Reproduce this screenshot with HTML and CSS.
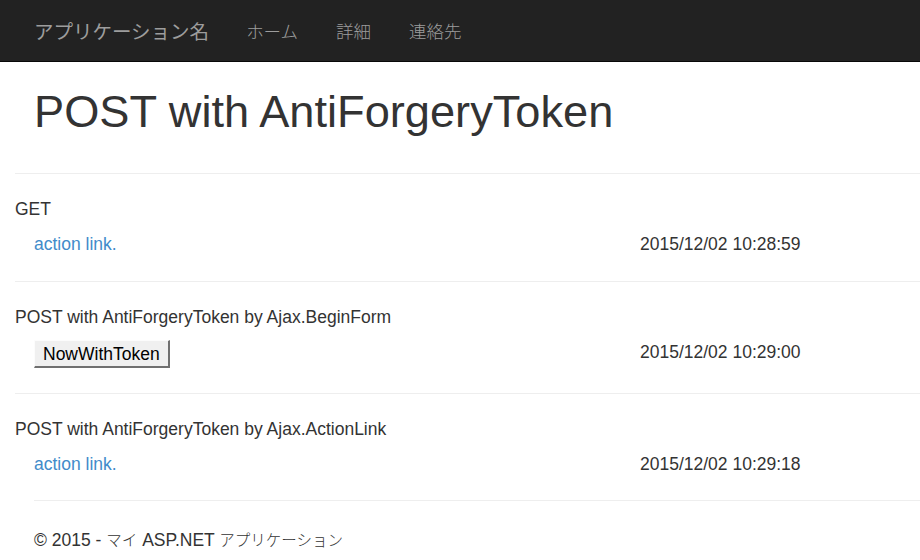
FILE: index.html
```html
<!DOCTYPE html>
<html lang="ja">
<head>
<meta charset="utf-8">
<title>POST with AntiForgeryToken</title>
<link rel="stylesheet" href="styles.css">
</head>
<body>
<nav class="navbar">
  <a class="brand" href="#">アプリケーション名</a>
  <ul class="nav">
    <li><a href="#">ホーム</a></li>
    <li><a href="#">詳細</a></li>
    <li><a href="#">連絡先</a></li>
  </ul>
</nav>
<main class="container">
  <h1 class="title">POST with AntiForgeryToken</h1>
  <div class="sections">
    <hr class="rule">
    <section class="block">
      <div class="label">GET</div>
      <div class="line">
        <div class="cell"><a class="link" href="#">action link.</a></div>
        <div class="time">2015/12/02 10:28:59</div>
      </div>
    </section>
    <hr class="rule">
    <section class="block block-form">
      <div class="label">POST with AntiForgeryToken by Ajax.BeginForm</div>
      <div class="line">
        <div class="cell"><button class="btn" type="button">NowWithToken</button></div>
        <div class="time">2015/12/02 10:29:00</div>
      </div>
    </section>
    <hr class="rule">
    <section class="block">
      <div class="label">POST with AntiForgeryToken by Ajax.ActionLink</div>
      <div class="line">
        <div class="cell"><a class="link" href="#">action link.</a></div>
        <div class="time">2015/12/02 10:29:18</div>
      </div>
    </section>
  </div>
  <hr class="rule footer-rule">
  <footer class="footer">© 2015 - <span class="ja">マイ</span> ASP.NET <span class="ja">アプリケーション</span></footer>
</main>
</body>
</html>
```
FILE: styles.css
```css
html, body {
  margin: 0;
  padding: 0;
  background: #fff;
}
body {
  font-family: "Liberation Sans", Arial, "Noto Sans CJK JP", sans-serif;
  font-size: 17.5px;
  line-height: 25px;
  color: #333;
  overflow: hidden;
}
.navbar {
  display: flex;
  align-items: center;
  height: 61px;
  background: #222;
  border-bottom: 1px solid #080808;
  padding-left: 34px;
}
.brand {
  font-family: "Noto Sans CJK JP", sans-serif;
  font-size: 19.5px;
  color: #9d9d9d;
  text-decoration: none;
  padding-right: 18px;
}
.nav {
  display: flex;
  list-style: none;
  margin: 0;
  padding: 0;
}
.nav a {
  display: block;
  font-family: "Noto Sans CJK JP", sans-serif;
  font-size: 17.5px;
  font-weight: 300;
  color: #9d9d9d;
  text-decoration: none;
  padding: 0 19px;
}
.container {
  padding-left: 34px;
}
.title {
  font-size: 45.2px;
  font-weight: normal;
  line-height: 49.5px;
  margin: 25px 0 0;
  color: #333;
}
.sections {
  margin-left: -19px;
  padding-top: 36px;
}
.rule {
  border: 0;
  border-top: 1px solid #eee;
  margin: 0;
  height: 0;
}
.block {
  padding: 23.5px 0 23.5px;
}
.block-form {
  padding-bottom: 24.5px;
}
.line {
  display: flex;
  align-items: flex-start;
  margin-top: 10px;
  padding-left: 19px;
}
.cell {
  width: 606px;
}
.link {
  color: #428bca;
  text-decoration: none;
}
.btn {
  font-family: "Liberation Sans", Arial, sans-serif;
  font-size: 17.5px;
  color: #000;
  background: #f0f0f0;
  height: 28px;
  padding: 0 8px;
  border-style: solid;
  border-width: 1px 2px 2px 1px;
  border-color: #fcfcfc #707070 #707070 #fcfcfc;
  border-radius: 0;
  line-height: 24px;
  display: block;
}
.time {
  white-space: nowrap;
}
.footer-rule {
  margin-top: -1px;
}
.footer {
  padding-top: 26px;
}
.ja {
  font-family: "Noto Sans CJK JP", sans-serif;
  font-size: 15.5px;
  font-weight: 300;
}
```
